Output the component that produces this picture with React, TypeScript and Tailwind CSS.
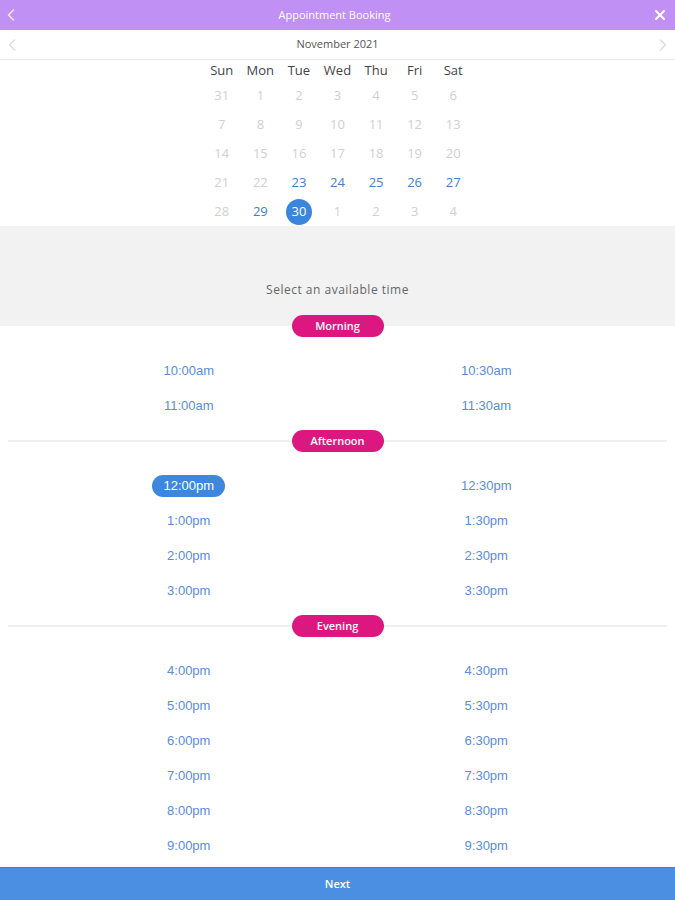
import React from 'react';

const weekdays = ['Sun', 'Mon', 'Tue', 'Wed', 'Thu', 'Fri', 'Sat'];

// [day, state] state: 0 = unavailable, 1 = available, 2 = selected
const weeks: [number, number][][] = [
  [[31, 0], [1, 0], [2, 0], [3, 0], [4, 0], [5, 0], [6, 0]],
  [[7, 0], [8, 0], [9, 0], [10, 0], [11, 0], [12, 0], [13, 0]],
  [[14, 0], [15, 0], [16, 0], [17, 0], [18, 0], [19, 0], [20, 0]],
  [[21, 0], [22, 0], [23, 1], [24, 1], [25, 1], [26, 1], [27, 1]],
  [[28, 0], [29, 1], [30, 2], [1, 0], [2, 0], [3, 0], [4, 0]],
];

const sections = [
  { name: 'Morning', line: false, slots: ['10:00am', '10:30am', '11:00am', '11:30am'] },
  {
    name: 'Afternoon',
    line: true,
    slots: ['12:00pm', '12:30pm', '1:00pm', '1:30pm', '2:00pm', '2:30pm', '3:00pm', '3:30pm'],
  },
  {
    name: 'Evening',
    line: true,
    slots: [
      '4:00pm', '4:30pm', '5:00pm', '5:30pm', '6:00pm', '6:30pm',
      '7:00pm', '7:30pm', '8:00pm', '8:30pm', '9:00pm', '9:30pm',
    ],
  },
];

const Chevron = ({ dir, className }: { dir: 'left' | 'right'; className: string }) => (
  <svg width="8" height="12" viewBox="0 0 8 12" className={className} fill="none">
    <path
      d={dir === 'left' ? 'M6.5 1 L1.5 6 L6.5 11' : 'M1.5 1 L6.5 6 L1.5 11'}
      stroke="currentColor"
      strokeWidth="1.5"
      strokeLinecap="round"
      strokeLinejoin="round"
    />
  </svg>
);

const App: React.FC = () => {
  return (
    <div className="w-[675px] h-[900px] bg-white flex flex-col font-['Open_Sans',sans-serif]">
      {/* Header */}
      <div className="h-[30px] bg-[#c190f4] flex items-center justify-between px-[7px] shrink-0">
        <Chevron dir="left" className="text-[#f3e6ff]" />
        <span className="text-white text-[11px]">Appointment Booking</span>
        <svg width="12" height="12" viewBox="0 0 12 12" className="mr-[2px]">
          <path d="M2 2 L10 10 M10 2 L2 10" stroke="white" strokeWidth="2" strokeLinecap="round" />
        </svg>
      </div>

      {/* Month */}
      <div className="h-[30px] flex items-center justify-between px-[8px] border-b border-[#e8e8e8] shrink-0">
        <Chevron dir="left" className="text-[#dddddd]" />
        <span className="text-[#555] text-[11px]">November 2021</span>
        <Chevron dir="right" className="text-[#dddddd]" />
      </div>

      {/* Calendar */}
      <div className="w-[270px] mx-auto shrink-0">
        <div className="grid grid-cols-7 h-[21px] items-center">
          {weekdays.map((d) => (
            <span key={d} className="text-center text-[13px] text-[#444]">
              {d}
            </span>
          ))}
        </div>
        {weeks.map((w, i) => (
          <div key={i} className="grid grid-cols-7 h-[29px] items-center">
            {w.map(([day, s], j) => (
              <div key={j} className="flex justify-center">
                {s === 2 ? (
                  <span className="w-[26px] h-[26px] rounded-full bg-[#3a86dc] text-white text-[13px] flex items-center justify-center">
                    {day}
                  </span>
                ) : (
                  <span className={`text-[13px] ${s === 1 ? 'text-[#3f7dd6]' : 'text-[#d0d0d0]'}`}>{day}</span>
                )}
              </div>
            ))}
          </div>
        ))}
      </div>

      {/* Prompt */}
      <div className="h-[100px] bg-[#f2f2f2] flex items-end justify-center pb-[27px] shrink-0">
        <span className="text-[12px] text-[#666] tracking-[0.5px]">Select an available time</span>
      </div>

      {/* Time slots */}
      <div className="flex-1 flex flex-col">
        {sections.map((sec, si) => (
          <div key={sec.name} className="flex flex-col">
            <div className={`relative h-[22px] flex items-center justify-center ${si === 0 ? '-mt-[11px]' : ''}`}>
              {sec.line && <div className="absolute left-[8px] right-[8px] top-[10px] h-[2px] bg-[#f0f0f0]" />}
              <span className="relative w-[92px] h-[22px] rounded-full bg-[#dd1780] text-white text-[11px] font-semibold flex items-center justify-center">
                {sec.name}
              </span>
            </div>
            <div
              className={`grid grid-cols-2 px-[40px] pt-[16px] ${si === sections.length - 1 ? 'pb-[4px]' : 'pb-[7px]'}`}
            >
              {sec.slots.map((t) => (
                <div key={t} className="h-[35px] flex items-center justify-center">
                  {t === '12:00pm' ? (
                    <span className="h-[22px] px-[11px] rounded-full bg-[#3d87de] text-white text-[13px] font-['Liberation_Sans',sans-serif] flex items-center">
                      {t}
                    </span>
                  ) : (
                    <span className="text-[13px] text-[#5a8ce0] font-['Liberation_Sans',sans-serif]">{t}</span>
                  )}
                </div>
              ))}
            </div>
          </div>
        ))}
      </div>

      {/* Next */}
      <div className="h-[33px] bg-[#4a8fe2] border-t border-[#3f80d6] flex items-center justify-center shrink-0">
        <span className="text-white text-[11px] font-semibold">Next</span>
      </div>
    </div>
  );
};

export default App;
